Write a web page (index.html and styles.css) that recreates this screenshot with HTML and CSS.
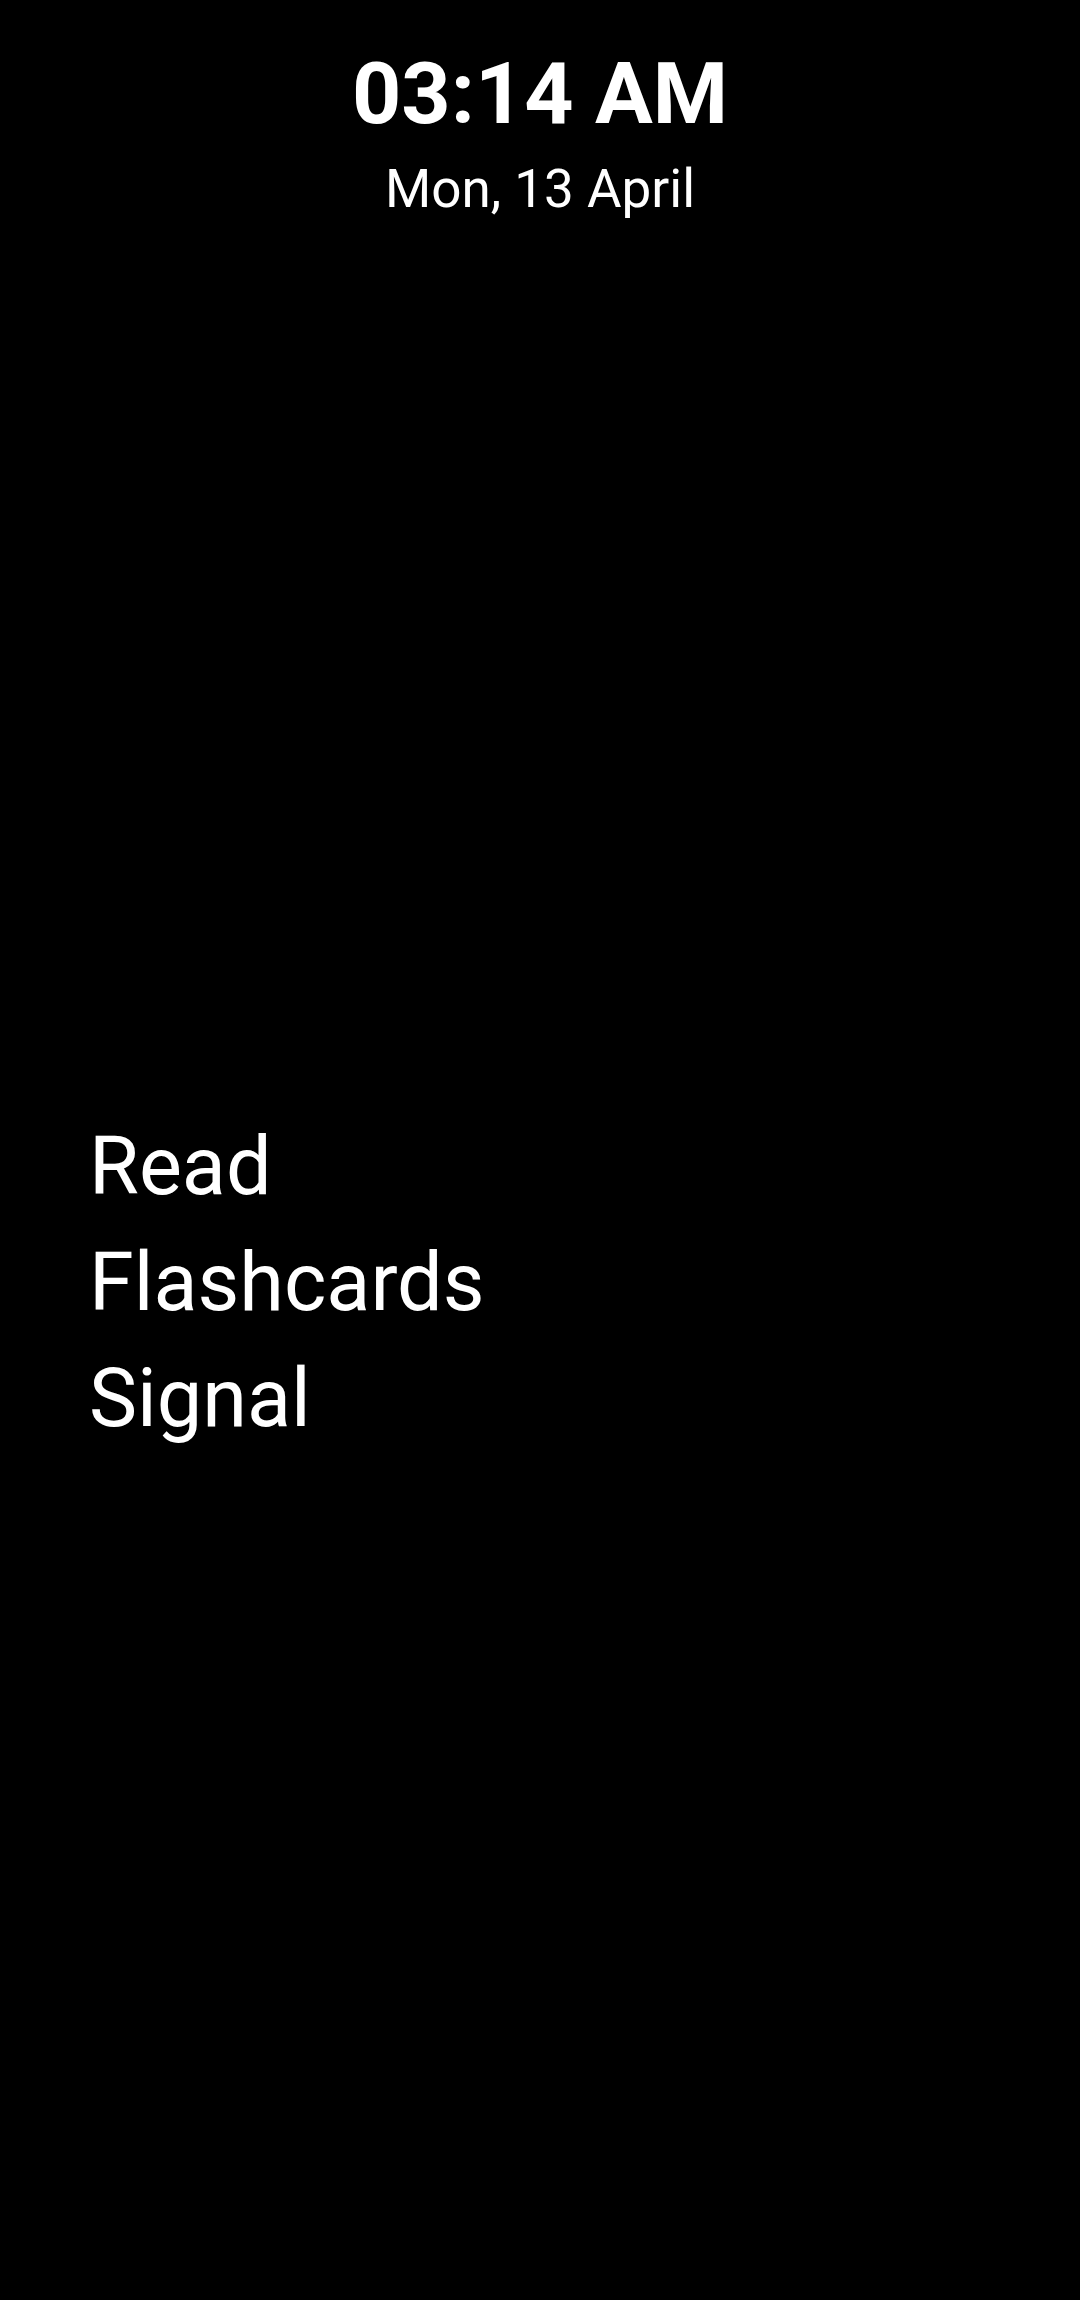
FILE: index.html
```html
<!DOCTYPE html>
<html>
<head>
<meta charset="utf-8">
<link rel="stylesheet" href="styles.css">
</head>
<body>
<div class="screen">
  <header class="clock">
    <div class="time">03:14 AM</div>
    <div class="date">Mon, 13 April</div>
  </header>
  <nav class="apps">
    <div class="app">Read</div>
    <div class="app">Flashcards</div>
    <div class="app">Signal</div>
  </nav>
</div>
</body>
</html>
```
FILE: styles.css
```css
html, body {
  margin: 0;
  padding: 0;
  background: #000;
}
.screen {
  width: 1080px;
  height: 2300px;
  background: #000;
  color: #fff;
  font-family: Roboto, "Noto Sans", sans-serif;
  display: flex;
  flex-direction: column;
}
.clock {
  padding-top: 44px;
  text-align: center;
}
.time {
  font-size: 86px;
  font-weight: 700;
  line-height: 100px;
}
.date {
  margin-top: 15px;
  font-size: 53px;
  font-weight: 400;
  line-height: 60px;
}
.apps {
  margin-top: 890px;
  padding-left: 89px;
  display: flex;
  flex-direction: column;
}
.app {
  font-size: 81px;
  line-height: 116px;
}
```
